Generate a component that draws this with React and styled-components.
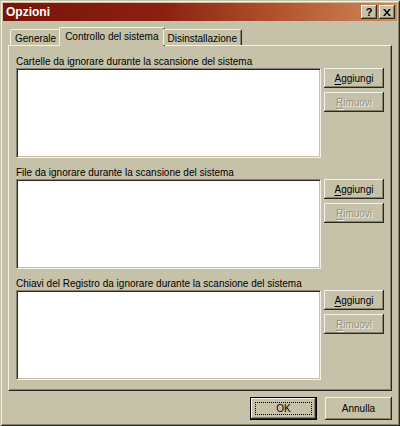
import styled, { createGlobalStyle } from "styled-components";

const GlobalStyle = createGlobalStyle`
html, body { margin: 0; padding: 0; background: #c6c2aa; }
* { box-sizing: border-box; }
`;

const FACE = "#c6c2aa";
const SHADOW = "#86826e";
const DARK = "#2a2a22";
const LIGHT = "#f4f2e8";

const sections = [
    "Cartelle da ignorare durante la scansione del sistema",
    "File da ignorare durante la scansione del sistema",
    "Chiavi del Registro da ignorare durante la scansione del sistema",
];

export default function App() {
    return (
        <Window>
            <GlobalStyle />
            <TitleBar>
                <TitleText>Opzioni</TitleText>
                <CaptionButtons>
                    <CaptionButton>?</CaptionButton>
                    <CaptionButton>
                        <svg width="8" height="7" viewBox="0 0 8 7">
                            <path d="M0 0h2l2 2.5L6 0h2L5 3.5 8 7H6L4 4.5 2 7H0l3-3.5z" fill="#000" />
                        </svg>
                    </CaptionButton>
                </CaptionButtons>
            </TitleBar>
            <TabStrip>
                <Tab>Generale</Tab>
                <Tab active>Controllo del sistema</Tab>
                <Tab>Disinstallazione</Tab>
            </TabStrip>
            <Panel>
                {sections.map(label => (
                    <Section key={label}>
                        <SectionLabel>{label}</SectionLabel>
                        <SectionRow>
                            <ListBox />
                            <ButtonColumn>
                                <Button><u>A</u>ggiungi</Button>
                                <Button disabled><u>R</u>imuovi</Button>
                            </ButtonColumn>
                        </SectionRow>
                    </Section>
                ))}
            </Panel>
            <Footer>
                <DefaultButton><Focus>OK</Focus></DefaultButton>
                <Button wide>Annulla</Button>
            </Footer>
        </Window>
    );
}

const Window = styled.div`
width:400px;
height:426px;
background:${FACE};
font-family:"Liberation Sans", Arial, sans-serif;
font-size:10px;
color:#000;
display:flex;
flex-direction:column;
padding:2px;
box-shadow: inset 1px 1px ${FACE}, inset -1px -1px ${DARK}, inset 2px 2px ${LIGHT}, inset -2px -2px ${SHADOW};
overflow:hidden;
`;

const TitleBar = styled.div`
height:18px;
margin:1px 1px 0 1px;
display:flex;
align-items:center;
justify-content:space-between;
padding:0 2px 0 3px;
background: linear-gradient(to right, #7a1408 0%, #8a2010 40%, #b0502a 68%, #d08a5a 100%);
`;

const TitleText = styled.span`
color:#fff;
font-family:"Liberation Sans", Arial, sans-serif;
font-weight:bold;
font-size:12px;
`;

const CaptionButtons = styled.div`
display:flex;
gap:2px;
`;

const CaptionButton = styled.div`
width:16px;
height:14px;
background:${FACE};
display:flex;
align-items:center;
justify-content:center;
font-weight:bold;
font-size:11px;
font-family:"Liberation Sans", sans-serif;
box-shadow: inset -1px -1px ${DARK}, inset 1px 1px ${LIGHT}, inset -2px -2px ${SHADOW};
`;

const TabStrip = styled.div`
display:flex;
align-items:flex-end;
padding:0 0 0 8px;
margin-top:5px;
height:19px;
position:relative;
z-index:1;
`;

const Tab = styled.div`
height:${props => props.active ? "19px" : "16px"};
padding:${props => props.active ? "0 5px 2px" : "1px 4px 0"};
margin:${props => props.active ? "0 -2px -1px -2px" : "0"};
display:flex;
align-items:center;
background:${FACE};
white-space:nowrap;
border-left:1px solid ${LIGHT};
border-top:1px solid ${LIGHT};
border-right:1px solid ${DARK};
border-radius:2px 2px 0 0;
box-shadow: inset -1px 0 ${SHADOW};
`;

const Panel = styled.div`
margin:0 6px;
height:346px;
padding:9px 7px 0 7px;
border-left:1px solid ${LIGHT};
border-top:1px solid ${LIGHT};
border-right:1px solid ${DARK};
border-bottom:1px solid ${DARK};
box-shadow: inset -1px -1px ${SHADOW};
display:flex;
flex-direction:column;
gap:8px;
`;

const Section = styled.div`
display:flex;
flex-direction:column;
`;

const SectionLabel = styled.div`
height:13px;
line-height:13px;
white-space:nowrap;
`;

const SectionRow = styled.div`
display:flex;
gap:3px;
`;

const ListBox = styled.div`
width:306px;
height:90px;
background:#fff;
border-left:1px solid ${SHADOW};
border-top:1px solid ${SHADOW};
border-right:1px solid ${LIGHT};
border-bottom:1px solid ${LIGHT};
box-shadow: inset 1px 1px ${DARK}, inset -1px -1px ${FACE};
`;

const ButtonColumn = styled.div`
display:flex;
flex-direction:column;
gap:4px;
`;

const Button = styled.div`
width:${props => props.wide ? "67px" : "60px"};
height:${props => props.wide ? "23px" : "20px"};
display:flex;
align-items:center;
justify-content:center;
background:${FACE};
color:${props => props.disabled ? "#96927f" : "#000"};
text-shadow:${props => props.disabled ? `1px 1px ${LIGHT}` : "none"};
box-shadow: inset -1px -1px ${DARK}, inset 1px 1px ${LIGHT}, inset -2px -2px ${SHADOW};
u { text-decoration-thickness:1px; text-underline-offset:2px; }
`;

const Footer = styled.div`
display:flex;
justify-content:flex-end;
gap:8px;
padding:6px 6px 0 0;
`;

const DefaultButton = styled.div`
width:67px;
height:23px;
padding:4px;
background:${FACE};
border:1px solid #000;
box-shadow: inset -1px -1px ${DARK}, inset 1px 1px ${LIGHT}, inset -2px -2px ${SHADOW};
`;

const Focus = styled.div`
height:100%;
display:flex;
align-items:center;
justify-content:center;
border:1px dotted #000;
`;
